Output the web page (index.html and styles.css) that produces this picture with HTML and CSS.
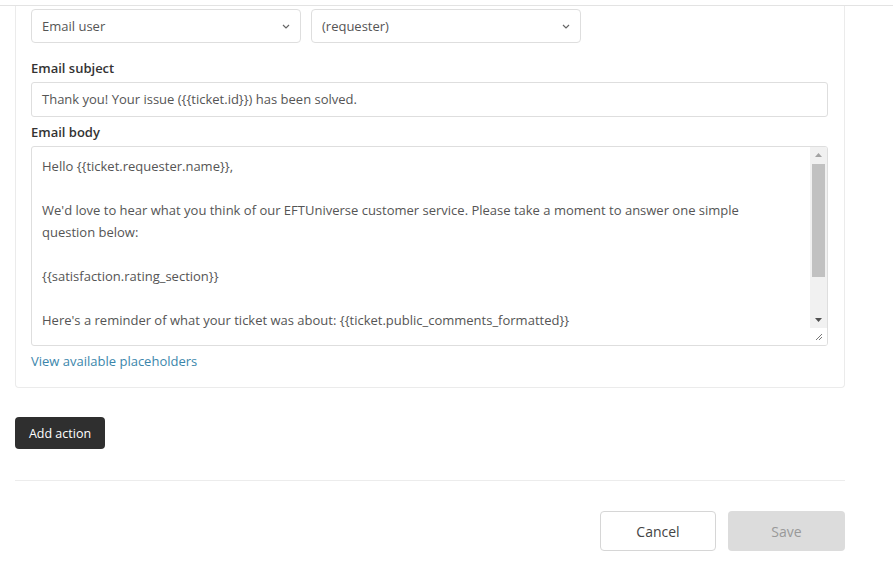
FILE: index.html
```html
<!DOCTYPE html>
<html>
<head>
<meta charset="utf-8">
<link rel="stylesheet" href="styles.css">
</head>
<body>
<div class="topline"></div>
<div class="page">
  <div class="card">
    <div class="row">
      <div class="select"><span>Email user</span><svg class="chev" width="8" height="5" viewBox="0 0 8 5"><path d="M1 1l3 3 3-3" fill="none" stroke="#666" stroke-width="1.2"/></svg></div>
      <div class="select"><span>(requester)</span><svg class="chev" width="8" height="5" viewBox="0 0 8 5"><path d="M1 1l3 3 3-3" fill="none" stroke="#666" stroke-width="1.2"/></svg></div>
    </div>
    <div class="label">Email subject</div>
    <div class="input">Thank you! Your issue ({{ticket.id}}) has been solved.</div>
    <div class="label">Email body</div>
    <div class="textarea">
      <div class="ta-text">
        <p>Hello {{ticket.requester.name}},</p>
        <p>&nbsp;</p>
        <p>We'd love to hear what you think of our EFTUniverse customer service. Please take a moment to answer one simple question below:</p>
        <p>&nbsp;</p>
        <p>{{satisfaction.rating_section}}</p>
        <p>&nbsp;</p>
        <p>Here's a reminder of what your ticket was about: {{ticket.public_comments_formatted}}</p>
      </div>
      <div class="scrollbar">
        <div class="arrow up"><svg width="7" height="4" viewBox="0 0 7 4"><path d="M0 4L3.5 0 7 4z" fill="#a3a3a3"/></svg></div>
        <div class="track"><div class="thumb"></div></div>
        <div class="arrow down"><svg width="7" height="4" viewBox="0 0 7 4"><path d="M0 0L3.5 4 7 0z" fill="#505050"/></svg></div>
        <div class="grip"><svg width="9" height="9" viewBox="0 0 9 9"><path d="M8 2L2 8M8 5L5 8" stroke="#777" stroke-width="1"/></svg></div>
      </div>
    </div>
    <a class="link">View available placeholders</a>
  </div>
  <button class="add">Add action</button>
  <div class="divider"></div>
  <div class="footer">
    <button class="cancel">Cancel</button>
    <button class="save">Save</button>
  </div>
</div>
</body>
</html>
```
FILE: styles.css
```css
* { box-sizing: border-box; }
html, body { margin: 0; padding: 0; background: #fff; }
body {
  font-family: "Open Sans", "Noto Sans", sans-serif;
  font-size: 13px;
  color: #555;
  width: 893px;
  height: 569px;
  overflow: hidden;
}
.topline {
  height: 6px;
  border-bottom: 1px solid #e3e3e3;
}
.page {
  padding: 0 48px 0 15px;
}
.card {
  border: 1px solid #ebebeb;
  border-top: none;
  border-radius: 0 0 4px 4px;
  padding: 3px 16px 16px 15px;
  width: 830px;
}
.row {
  display: flex;
  gap: 10px;
}
.select {
  width: 270px;
  height: 34px;
  border: 1px solid #dedede;
  border-radius: 4px;
  display: flex;
  align-items: center;
  justify-content: space-between;
  padding: 0 10px 0 10px;
  color: #555;
}
.label {
  font-weight: 600;
  color: #333;
  margin-top: 16px;
  height: 23px;
  line-height: 19px;
}
.input {
  height: 35px;
  border: 1px solid #dedede;
  border-radius: 3px;
  padding: 0 10px;
  line-height: 33px;
  color: #555;
}
.input + .label { margin-top: 6px; }
.textarea {
  height: 200px;
  border: 1px solid #dedede;
  border-radius: 3px;
  display: flex;
  overflow: hidden;
}
.ta-text {
  flex: 1;
  padding: 8px 40px 0 10px;
  line-height: 22px;
  overflow: hidden;
}
.ta-text p { margin: 0; }
.scrollbar {
  width: 17px;
  display: flex;
  flex-direction: column;
  background: #f1f1f1;
}
.arrow {
  height: 16px;
  display: flex;
  align-items: center;
  justify-content: center;
}
.track {
  flex: 1;
  padding: 0 2px;
}
.thumb {
  height: 113px;
  margin-top: 1px;
  background: #c1c1c1;
}
.grip {
  height: 17px;
  background: #fff;
  display: flex;
  align-items: center;
  justify-content: center;
}
.link {
  display: block;
  margin-top: 6px;
  color: #3b86ab;
  line-height: 19px;
}
button {
  font-family: inherit;
  cursor: pointer;
}
.add {
  margin-top: 29px;
  height: 32px;
  width: 90px;
  border: none;
  border-radius: 4px;
  background: #2f2f2f;
  color: #fff;
  font-size: 12.5px;
  padding: 0;
}
.divider {
  margin-top: 31px;
  width: 830px;
  border-top: 1px solid #ececec;
}
.footer {
  display: flex;
  justify-content: flex-end;
  gap: 12px;
  width: 830px;
  margin-top: 30px;
}
.footer button {
  height: 40px;
  border-radius: 4px;
  font-size: 14px;
}
.cancel {
  width: 116px;
  background: #fff;
  border: 1px solid #d6d6d6;
  color: #444;
}
.save {
  width: 117px;
  background: #dcdcdc;
  border: none;
  color: #999;
}
```
